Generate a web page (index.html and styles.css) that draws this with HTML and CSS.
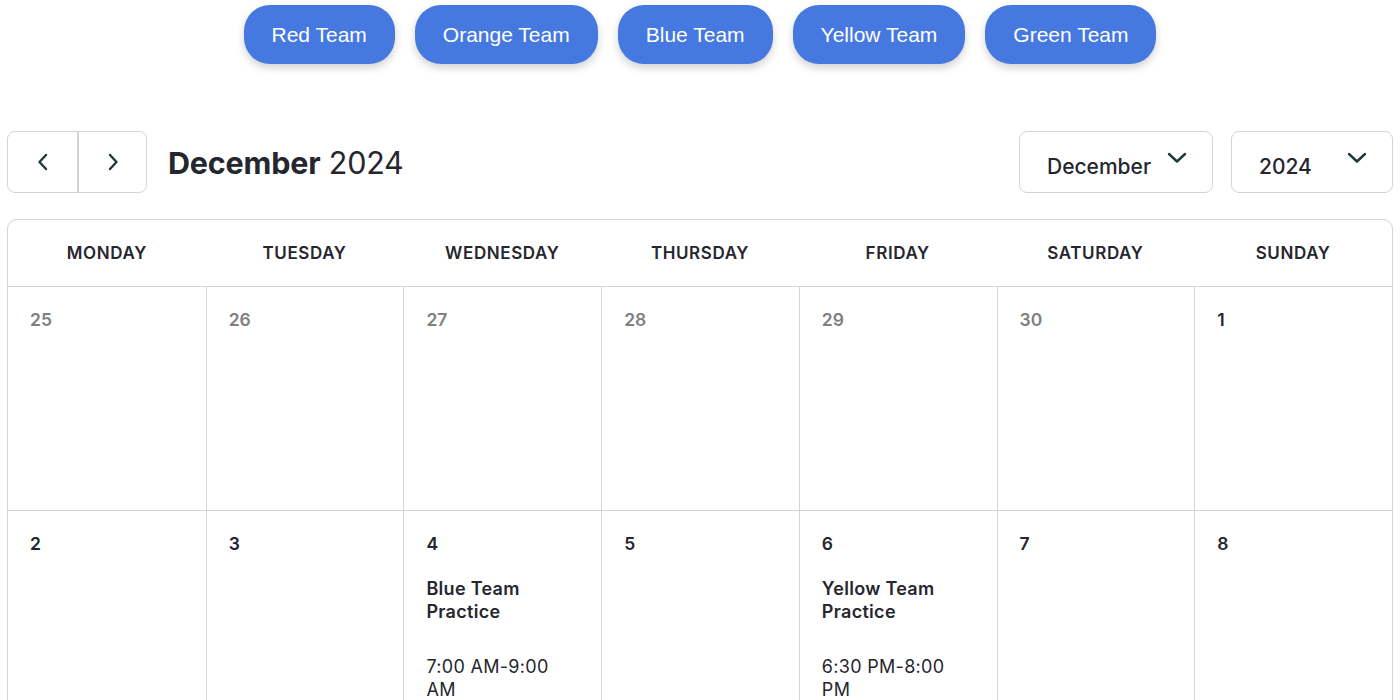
FILE: index.html
```html
<!DOCTYPE html>
<html>
<head>
<meta charset="utf-8">
<link rel="stylesheet" href="styles.css">
</head>
<body>
<div class="teams">
  <button class="team">Red Team</button>
  <button class="team">Orange Team</button>
  <button class="team">Blue Team</button>
  <button class="team">Yellow Team</button>
  <button class="team">Green Team</button>
</div>
<div class="toolbar">
  <div class="nav">
    <button class="navbtn"><svg width="14" height="20" viewBox="0 0 14 20"><path d="M10 3 L3.5 10 L10 17" fill="none" stroke="#1e3a3a" stroke-width="2.4" stroke-linecap="round" stroke-linejoin="round"/></svg></button>
    <button class="navbtn"><svg width="14" height="20" viewBox="0 0 14 20"><path d="M4 3 L10.5 10 L4 17" fill="none" stroke="#1e3a3a" stroke-width="2.4" stroke-linecap="round" stroke-linejoin="round"/></svg></button>
  </div>
  <div class="title"><b>December</b> 2024</div>
  <div class="spacer"></div>
  <div class="select sel-month"><span>December</span><svg width="20" height="12" viewBox="0 0 20 12"><path d="M2 2 L10 9.5 L18 2" fill="none" stroke="#1e3a3a" stroke-width="2.4" stroke-linecap="round" stroke-linejoin="round"/></svg></div>
  <div class="select sel-year"><span>2024</span><svg width="20" height="12" viewBox="0 0 20 12"><path d="M2 2 L10 9.5 L18 2" fill="none" stroke="#1e3a3a" stroke-width="2.4" stroke-linecap="round" stroke-linejoin="round"/></svg></div>
</div>
<div class="calendar">
  <div class="head">MONDAY</div>
  <div class="head">TUESDAY</div>
  <div class="head">WEDNESDAY</div>
  <div class="head">THURSDAY</div>
  <div class="head">FRIDAY</div>
  <div class="head">SATURDAY</div>
  <div class="head">SUNDAY</div>

  <div class="cell other"><div class="num">25</div></div>
  <div class="cell other"><div class="num">26</div></div>
  <div class="cell other"><div class="num">27</div></div>
  <div class="cell other"><div class="num">28</div></div>
  <div class="cell other"><div class="num">29</div></div>
  <div class="cell other"><div class="num">30</div></div>
  <div class="cell"><div class="num">1</div></div>

  <div class="cell"><div class="num">2</div></div>
  <div class="cell"><div class="num">3</div></div>
  <div class="cell"><div class="num">4</div><div class="event"><div class="ev-title">Blue Team Practice</div><div class="ev-time">7:00 AM-9:00 AM</div></div></div>
  <div class="cell"><div class="num">5</div></div>
  <div class="cell"><div class="num">6</div><div class="event"><div class="ev-title">Yellow Team Practice</div><div class="ev-time">6:30 PM-8:00 PM</div></div></div>
  <div class="cell"><div class="num">7</div></div>
  <div class="cell"><div class="num">8</div></div>
</div>
</body>
</html>
```

FILE: styles.css
```css
* { box-sizing: border-box; }
body {
  margin: 0 7px;
  font-family: Inter, "Liberation Sans", sans-serif;
  color: #26262e;
  background: #fff;
}
.teams {
  display: flex;
  justify-content: center;
  gap: 20px;
  padding-top: 5px;
}
.team {
  height: 59px;
  padding: 0 28px;
  border: none;
  border-radius: 26px;
  background: #4679e0;
  color: #fff;
  font-family: "Liberation Sans", Arial, sans-serif;
  font-size: 21px;
  box-shadow: 0 4px 8px rgba(0,0,0,0.18);
}
.toolbar {
  display: flex;
  align-items: center;
  margin-top: 67px;
  height: 62px;
}
.nav {
  display: flex;
  height: 62px;
  border: 1px solid #d3d3db;
  border-radius: 8px;
}
.navbtn {
  width: 69px;
  height: 100%;
  border: none;
  background: transparent;
  display: flex;
  align-items: center;
  justify-content: center;
  padding: 0;
}
.navbtn + .navbtn { border-left: 2px solid #d3d3db; }
.title {
  margin-left: 21px;
  font-size: 30.5px;
  color: #26262e;
  letter-spacing: -0.2px;
}
.title b { font-weight: 700; }
.spacer { flex: 1; }
.select {
  height: 62px;
  border: 1px solid #d3d3db;
  border-radius: 8px;
  display: flex;
  align-items: center;
  justify-content: space-between;
  font-size: 21px;
  font-weight: 500;
  color: #26262e;
}
.select span { padding-top: 8px; }
.select svg { margin-top: -8px; }
.sel-month { width: 194px; padding: 0 25px 0 27px; }
.sel-year { width: 162px; padding: 0 25px 0 27px; margin-left: 18px; }
.calendar {
  margin-top: 26px;
  display: grid;
  grid-template-columns: repeat(7, 1fr);
  grid-template-rows: 67px 224px 224px;
  border: 1px solid #d3d3db;
  border-radius: 10px;
}
.head {
  display: flex;
  align-items: center;
  justify-content: center;
  font-size: 17px;
  font-weight: 600;
  letter-spacing: 0.6px;
  color: #26262e;
  border-bottom: 1px solid #d3d3db;
}
.cell {
  border-left: 1px solid #d3d3db;
  border-bottom: 1px solid #d3d3db;
  padding: 21px 22px;
}
.cell:nth-child(7n+1) { border-left: none; }
.num {
  font-size: 17.5px;
  font-weight: 600;
  line-height: 24px;
  color: #26262e;
}
.other .num { color: #808080; }
.event { margin-top: 21px; font-size: 18px; line-height: 23px; letter-spacing: 0.3px; padding-right: 10px; }
.ev-title { font-weight: 600; }
.ev-time { margin-top: 32px; }
```
